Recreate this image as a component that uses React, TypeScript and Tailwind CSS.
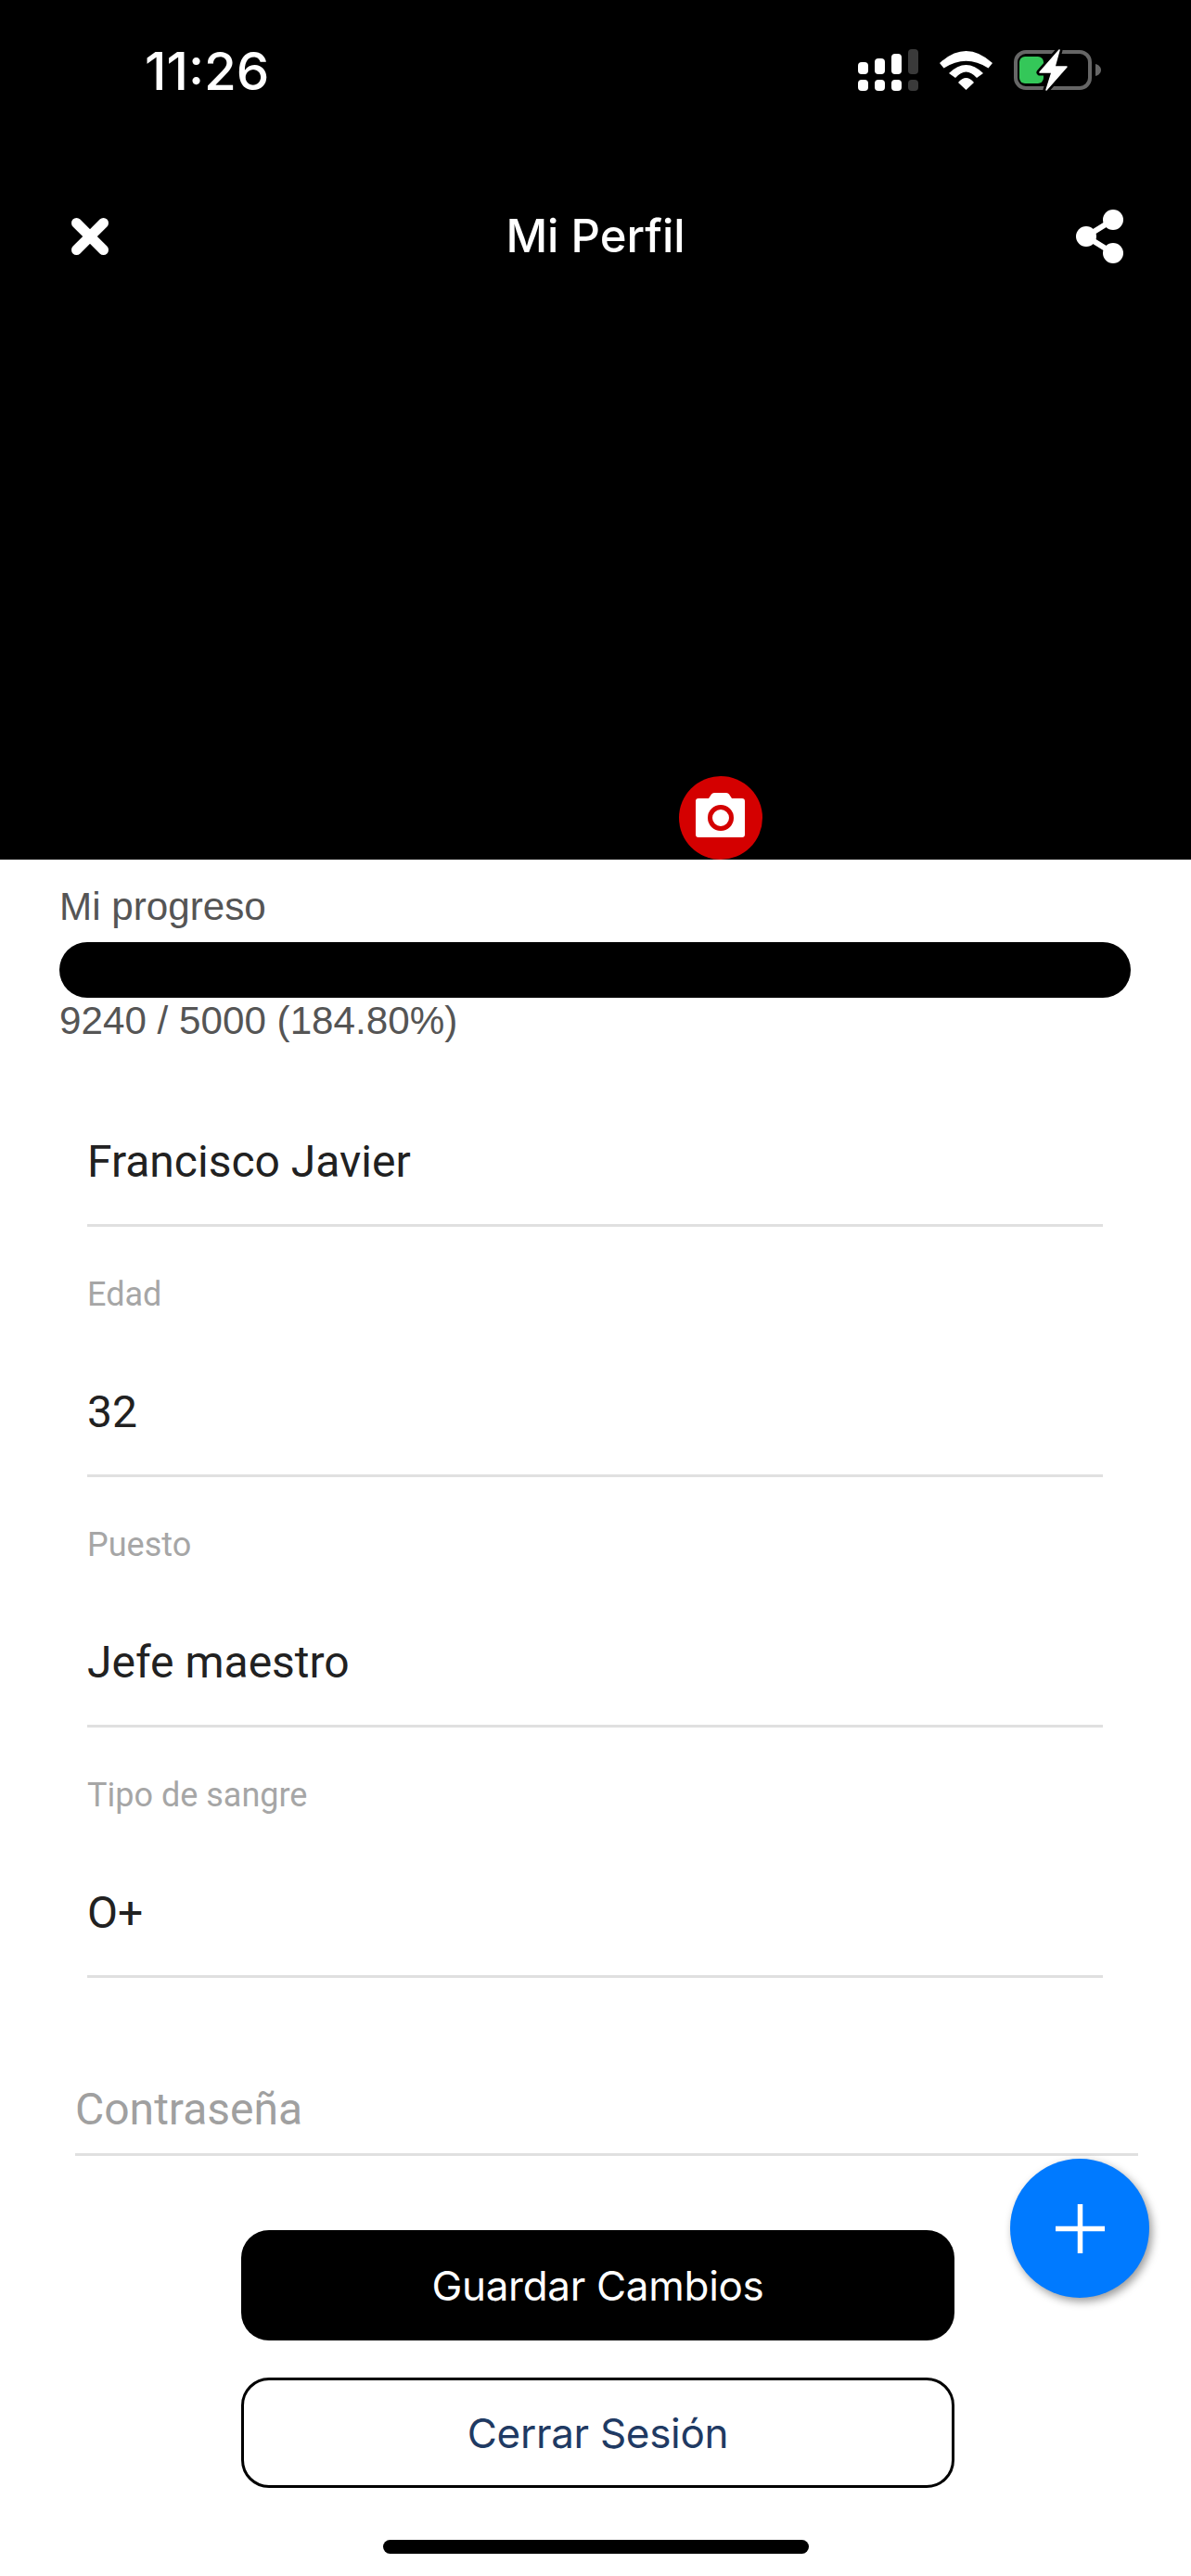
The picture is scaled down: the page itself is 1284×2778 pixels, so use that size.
const inter = { fontFamily: "Inter, sans-serif" };

function SignalIcon() {
  return (
    <svg width="65" height="45" viewBox="0 0 65 45">
      <rect x="0" y="14" width="11" height="13" rx="4" fill="#fff" />
      <rect x="18" y="10" width="11" height="17" rx="4" fill="#fff" />
      <rect x="36" y="5" width="11" height="22" rx="4" fill="#fff" />
      <rect x="54" y="0" width="11" height="27" rx="4" fill="#3a3a3a" />
      <rect x="0" y="33" width="11" height="12" rx="4" fill="#fff" />
      <rect x="18" y="33" width="11" height="12" rx="4" fill="#fff" />
      <rect x="36" y="33" width="11" height="12" rx="4" fill="#fff" />
      <rect x="54" y="33" width="11" height="12" rx="4" fill="#3a3a3a" />
    </svg>
  );
}

function WifiIcon() {
  return (
    <svg width="57" height="42" viewBox="0 0 57 42" fill="#fff">
      <path d="M0 13Q28.5 -13 57 13L52.500 18.500Q28.500 3 4.500 18.500Z" />
      <path d="M10 24Q28.500 6 47 24L40 29Q28.500 16 17 29Z" />
      <path d="M20 34Q28.500 24 37 34L28.500 42Z" />
    </svg>
  );
}

function BatteryIcon() {
  return (
    <svg width="94" height="45" viewBox="0 -1 94 45" className="overflow-visible">
      <rect x="2" y="2" width="80" height="39" rx="11" fill="none" stroke="#666" strokeWidth="4" />
      <rect x="6" y="7" width="26" height="29" rx="6" fill="#34c759" />
      <path d="M88 15C92 16 94 19 94 21.500C94 24 92 27 88 28Z" fill="#666" />
      <path d="M49 0L28 24L41 24L35 43L57 18L44 18Z" fill="#fff" stroke="#000" strokeWidth="7" strokeLinejoin="round" paintOrder="stroke" />
      <path d="M49 0L28 24L41 24L35 43L57 18L44 18Z" fill="#fff" stroke="#fff" strokeWidth="1.500" strokeLinejoin="round" />
    </svg>
  );
}

function CloseIcon() {
  return (
    <svg width="40" height="40" viewBox="0 0 40 40">
      <path d="M5.500 5.500L34.500 34.500M34.500 5.500L5.500 34.500" stroke="#fff" strokeWidth="11" strokeLinecap="round" />
    </svg>
  );
}

function ShareIcon() {
  return (
    <svg width="51" height="58" viewBox="0 0 51 58" fill="#fff">
      <path d="M40 11L11 29L40 47" fill="none" stroke="#fff" strokeWidth="6" />
      <circle cx="40" cy="11" r="11" />
      <circle cx="11" cy="29" r="11" />
      <circle cx="40" cy="47" r="11" />
    </svg>
  );
}

function CameraButton() {
  return (
    <div className="absolute bottom-0 left-[732px] flex h-[90px] w-[90px] items-center justify-center rounded-full bg-[#d40000]">
      <svg width="90" height="90" viewBox="0 0 90 90">
        <path
          d="M21 24H32L35 19.500Q36 18 38 18H51Q53 18 54 19.500L57 24H68Q71 24 71 27V63Q71 66 68 66H21Q18 66 18 63V27Q18 24 21 24Z"
          fill="#fff"
        />
        <circle cx="45" cy="45" r="11.500" fill="#fff" stroke="#d40000" strokeWidth="5" />
      </svg>
    </div>
  );
}

function Field({ label, value }: { label?: string; value: string }) {
  return (
    <div className="ml-[94px] w-[1095px] border-b-[3px] border-[#e0e0e0]">
      {label && (
        <div className="mt-[49px] mb-[34px] text-[36px] leading-[48px] text-[#a6a6a6]">{label}</div>
      )}
      <div className="pt-[2px] text-[48px] leading-[134px] text-[#212121]">{value}</div>
    </div>
  );
}

export default function App() {
  return (
    <div className="relative w-[1284px] bg-white" style={{ fontFamily: "Roboto, sans-serif" }}>
      <header className="relative h-[927px] bg-black">
        <div className="flex h-[45px] translate-y-[53px] items-center justify-between pl-[156px] pr-[97px]">
          <span className="pt-[2px] text-[56.5px] font-medium leading-[45px] text-white" style={inter}>
            11:26
          </span>
          <div className="flex items-center gap-[23px]">
            <SignalIcon />
            <WifiIcon />
            <BatteryIcon />
          </div>
        </div>
        <div className="mt-[181px] grid h-[58px] grid-cols-[1fr_auto_1fr] items-center pl-[77px] pr-[73px]">
          <CloseIcon />
          <span className="pr-[4px] text-[49px] font-medium leading-[58px] text-white" style={inter}>
            Mi Perfil
          </span>
          <div className="justify-self-end">
            <ShareIcon />
          </div>
        </div>
        <CameraButton />
      </header>

      <section className="pl-[64px] pr-[65px] pt-[27px] text-[42.2px] leading-[48px] text-[#555]" style={{ fontFamily: '"Liberation Sans", sans-serif' }}>
        <div>Mi progreso</div>
        <div className="mt-[14px] h-[60px] rounded-[30px] bg-black" />
        <div className="mt-px">9240 / 5000 (184.80%)</div>
      </section>

      <div className="mt-[59px]">
        <Field value="Francisco Javier" />
        <Field label="Edad" value="32" />
        <Field label="Puesto" value="Jefe maestro" />
        <Field label="Tipo de sangre" value="O+" />
      </div>

      <div className="ml-[81px] mt-[93px] w-[1146px] border-b-[3px] border-[#e0e0e0] pt-[2px] text-[48px] leading-[94px] text-[#a0a0a0]">
        Contraseña
      </div>

      <div className="ml-[260px] mt-[80px] flex w-[769px] flex-col gap-[40px] text-[44px] tracking-[-0.3px]" style={inter}>
        <button className="h-[119px] rounded-[30px] bg-black text-white">Guardar Cambios</button>
        <button className="h-[119px] rounded-[30px] border-[3px] border-black bg-white text-[#1f3a63]">Cerrar Sesión</button>
      </div>

      <div className="ml-[413px] mt-[56px] h-[15px] w-[459px] rounded-full bg-black" />
      <div className="h-[24px]" />

      <div className="absolute left-[1089px] top-[2328px] flex h-[150px] w-[150px] items-center justify-center rounded-full bg-[#007aff] shadow-[3px_4px_10px_rgba(0,0,0,0.4)]">
        <svg width="53" height="53" viewBox="0 0 53 53">
          <path d="M26.500 0V53M0 26.500H53" stroke="#fff" strokeWidth="5.500" />
        </svg>
      </div>
    </div>
  );
}
